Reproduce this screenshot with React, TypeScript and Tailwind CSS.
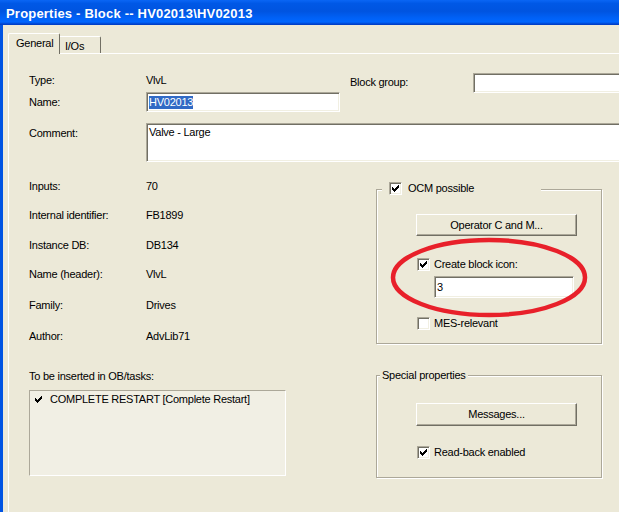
import React from "react";

function CheckMark() {
  const rows: [number, number, number][] = [
    [6, 0, 1],
    [5, 1, 2],
    [0, 2, 1],
    [4, 2, 3],
    [0, 3, 2],
    [3, 3, 3],
    [0, 4, 5],
    [1, 5, 3],
    [2, 6, 1],
  ];
  return (
    <svg width="7" height="7" viewBox="0 0 7 7" shapeRendering="crispEdges" className="shrink-0">
      {rows.map(([x, y, w], i) => (
        <rect key={i} x={x} y={y} width={w} height={1} fill="#000" />
      ))}
    </svg>
  );
}

function CheckBox({ checked }: { checked: boolean }) {
  return (
    <div className="w-[13px] h-[13px] shrink-0 bg-white border border-t-[#aca899] border-l-[#aca899] border-b-white border-r-white shadow-[inset_1px_1px_0_#716f64,inset_-1px_-1px_0_#f1efe2] flex items-center justify-center">
      {checked && <CheckMark />}
    </div>
  );
}

function Field({ className = "", children }: { className?: string; children?: React.ReactNode }) {
  return (
    <div
      className={
        "bg-white border border-t-[#aca899] border-l-[#aca899] border-b-white border-r-white shadow-[inset_1px_1px_0_#716f64,inset_-1px_-1px_0_#f1efe2] flex pl-[2px] " +
        className
      }
    >
      {children}
    </div>
  );
}

function Button({ children, className = "" }: { children: React.ReactNode; className?: string }) {
  return (
    <div
      className={
        "w-[161px] bg-[#ece9d8] border border-t-white border-l-white border-b-[#716f64] border-r-[#716f64] shadow-[inset_-1px_-1px_0_#aca899] flex items-center justify-center " +
        className
      }
    >
      {children}
    </div>
  );
}

function InfoRow({ label, value, mt }: { label: string; value: string; mt: string }) {
  return (
    <div className={"flex h-[13px] " + mt}>
      <span className="w-[117px] shrink-0">{label}</span>
      <span>{value}</span>
    </div>
  );
}

export default function App() {
  return (
    <div className="relative w-[619px] h-[512px] overflow-hidden bg-[#ece9d8] font-['Liberation_Sans',Arial,sans-serif] text-[11px] leading-[13px] tracking-[-0.25px] text-black">
      {/* Title bar */}
      <div className="h-[25px] bg-[linear-gradient(to_bottom,#0a66f5_0%,#0058e6_14%,#0054e0_45%,#0060f5_70%,#0066ff_88%,#003fc8_97%)] flex items-center pl-[6px] pt-[1px]">
        <span className="text-white font-bold text-[13px] tracking-[0.2px] whitespace-nowrap">
          Properties - Block -- HV02013\HV02013
        </span>
      </div>

      <div className="flex h-[487px]">
        <div className="w-[3px] shrink-0 bg-[#0054e3]" />
        <div className="flex-1 min-w-0 pl-[5px] pt-[8px] flex flex-col">
          {/* Tabs */}
          <div className="flex items-end h-[20px]">
            <div className="relative z-10 w-[52px] h-[21px] mb-[-1px] pl-[7px] pt-[3px] bg-[#ece9d8] border-l border-t border-l-white border-t-white border-r border-r-[#716f64] rounded-t-[2px]">
              General
            </div>
            <div className="w-[41px] h-[17px] pl-[5px] pt-[3px] border-t border-t-white border-r border-r-[#716f64] rounded-tr-[2px]">
              I/Os
            </div>
          </div>

          {/* Panel */}
          <div className="flex-1 border-t border-l border-white pl-[20px] pt-[19px] overflow-hidden">
            {/* Top section */}
            <div className="flex">
              <div className="w-[311px] shrink-0 flex flex-col">
                <div className="h-[19px] flex pt-[1px]">
                  <span className="w-[117px] shrink-0">Type:</span>
                  <span>VlvL</span>
                </div>
                <div className="h-[20px] flex items-center">
                  <span className="w-[117px] shrink-0">Name:</span>
                  <Field className="w-[194px] h-[20px] items-center">
                    <span className="bg-[#316ac5] text-white">HV02013</span>
                  </Field>
                </div>
              </div>
              <div className="ml-[10px] flex items-start">
                <span className="w-[123px] shrink-0 pt-[3px]">Block group:</span>
                <Field className="w-[300px] h-[20px] shrink-0" />
              </div>
            </div>

            {/* Comment */}
            <div className="flex mt-[11px]">
              <span className="w-[117px] shrink-0 pt-[4px]">Comment:</span>
              <Field className="w-[500px] h-[39px] shrink-0 items-start pt-[2px]">Valve - Large</Field>
            </div>

            {/* Lower section */}
            <div className="flex">
              <div className="w-[257px] shrink-0 flex flex-col">
                <InfoRow label="Inputs:" value="70" mt="mt-[18px]" />
                <InfoRow label="Internal identifier:" value="FB1899" mt="mt-[16px]" />
                <InfoRow label="Instance DB:" value="DB134" mt="mt-[17px]" />
                <InfoRow label="Name (header):" value="VlvL" mt="mt-[16px]" />
                <InfoRow label="Family:" value="Drives" mt="mt-[18px]" />
                <InfoRow label="Author:" value="AdvLib71" mt="mt-[18px]" />

                <div className="mt-[27px] h-[13px]">To be inserted in OB/tasks:</div>
                <div className="mt-[7px] w-[257px] h-[86px] bg-[#f1efe4] border border-t-[#aca899] border-l-[#aca899] border-b-white border-r-white pt-[2px] pl-[5px]">
                  <div className="flex items-center h-[13px]">
                    <CheckMark />
                    <span className="ml-[8px] whitespace-nowrap">COMPLETE RESTART [Complete Restart]</span>
                  </div>
                </div>
              </div>

              <div className="ml-[90px] w-[226px] shrink-0 flex flex-col">
                {/* OCM group */}
                <div className="relative mt-[27px] w-[226px] h-[155px] border border-[#aca899] shadow-[inset_1px_1px_0_white,1px_1px_0_white] flex flex-col">
                  <div className="absolute left-[5px] top-[-8px] w-[159px] h-[13px] bg-[#ece9d8] pl-[7px] flex items-center">
                    <CheckBox checked />
                    <span className="ml-[6px]">OCM possible</span>
                  </div>
                  <Button className="mt-[24px] ml-[39px] h-[22px]">Operator C and M...</Button>
                  <div className="mt-[22px] ml-[40px] flex items-center h-[13px]">
                    <CheckBox checked />
                    <span className="ml-[4px]">Create block icon:</span>
                  </div>
                  <Field className="mt-[5px] ml-[57px] w-[140px] h-[22px] items-center">3</Field>
                  <div className="mt-[19px] ml-[40px] flex items-center h-[13px]">
                    <CheckBox checked={false} />
                    <span className="ml-[4px]">MES-relevant</span>
                  </div>
                </div>

                {/* Special properties group */}
                <div className="relative mt-[31px] w-[226px] h-[103px] border border-[#aca899] shadow-[inset_1px_1px_0_white,1px_1px_0_white] flex flex-col">
                  <div className="absolute left-[3px] top-[-7px] h-[13px] bg-[#ece9d8] pl-[2px] pr-[2px]">
                    Special properties
                  </div>
                  <Button className="mt-[27px] ml-[39px] h-[23px]">Messages...</Button>
                  <div className="mt-[20px] ml-[40px] flex items-center h-[13px]">
                    <CheckBox checked />
                    <span className="ml-[4px]">Read-back enabled</span>
                  </div>
                </div>
              </div>
            </div>
          </div>
        </div>
      </div>

      {/* Red annotation ellipse */}
      <svg className="absolute left-0 top-0 pointer-events-none" width="619" height="512">
        <ellipse cx="489" cy="277.5" rx="96" ry="37.5" fill="none" stroke="#e8202a" strokeWidth="4.5" />
      </svg>
    </div>
  );
}
